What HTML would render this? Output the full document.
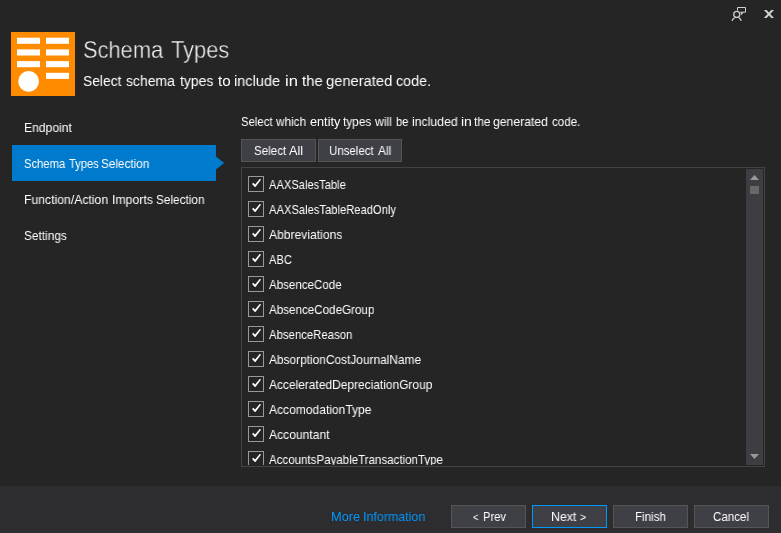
<!DOCTYPE html>
<html lang="en">
<head>
<meta charset="utf-8">
<title>Schema Types</title>
<style>
html,body{margin:0;padding:0;}
body{width:781px;height:533px;overflow:hidden;background:#252526;color:#ffffff;font-family:"Liberation Sans", Arial, sans-serif;font-size:12.7px;position:relative;}
.t{will-change:transform;position:absolute;white-space:pre;line-height:20px;transform-origin:0 0;display:block;}
.abs{position:absolute;}
h1{margin:0;font-weight:normal;font-size:24px;color:#f4f4f4;-webkit-text-stroke:0.4px #252526;}
#sub{font-size:15.2px;}
#footer{position:absolute;left:0;top:486px;width:781px;height:47px;background:#2d2d30;}
#more{color:#0097fb;}
.btn{position:absolute;box-sizing:border-box;background:#3f3f46;border:1px solid #555555;height:23px;padding:0;margin:0;font:inherit;color:inherit;border-radius:0;display:block;overflow:visible;text-align:left;}
.btn.focus{border-color:#0097fb;}
#icon{position:absolute;left:11px;top:32px;width:64px;height:64px;}
.ni{position:absolute;left:12px;width:204px;height:36px;}
.ni.on{background:#007acc;}
#arrow{position:absolute;left:204px;top:11.4px;width:8.1px;height:13px;background:#007acc;clip-path:polygon(0 0,100% 50%,0 100%);}
#list{position:absolute;left:241px;top:167px;width:524px;height:300px;box-sizing:border-box;border:1px solid #434346;background:#252526;overflow:hidden;}
#inner{position:absolute;left:0;top:0;width:522px;height:297px;overflow:hidden;}
.row{position:absolute;left:0;width:500px;height:25px;display:block;}
.cb{position:absolute;left:6px;top:0;width:16px;height:16px;box-sizing:border-box;border:1px solid #999999;background:#252526;display:block;}
.cb svg{position:absolute;left:0;top:0;display:block;}
#track{position:absolute;left:504px;top:1px;width:17px;height:296px;background:#3e3e42;}
</style>
</head>
<body>
<svg id="icon" viewBox="0 0 64 64">
<rect width="64" height="64" fill="#ff8c00"/>
<g fill="#ffffff">
<rect x="6" y="5.7" width="23" height="6.1"/><rect x="35" y="5.7" width="23" height="6.1"/>
<rect x="6" y="17.4" width="23" height="6.1"/><rect x="35" y="17.4" width="23" height="6.1"/>
<rect x="6" y="29.1" width="23" height="6.1"/><rect x="35" y="29.1" width="23" height="6.1"/>
<rect x="35" y="40.8" width="23" height="6.1"/>
<circle cx="17.6" cy="49.4" r="10.4"/>
</g>
</svg>
<h1><span class="t" style="left:82.79px;top:40px;transform:scaleX(0.9106)">Schema </span><span class="t" style="left:170.70px;top:40px;transform:scaleX(0.9099)">Types</span></h1>
<div id="sub"><span class="t" style="left:82.84px;top:71px;transform:scaleX(0.9100)">Select </span><span class="t" style="left:125.60px;top:71px;transform:scaleX(0.9188)">schema </span><span class="t" style="left:179.65px;top:71px;transform:scaleX(0.9194)">types </span><span class="t" style="left:217.75px;top:71px;transform:scaleX(0.9735)">to </span><span class="t" style="left:234.29px;top:71px;transform:scaleX(0.9574)">include </span><span class="t" style="left:284.96px;top:71px;transform:scaleX(1.0900)">in </span><span class="t" style="left:301.85px;top:71px;transform:scaleX(0.9762)">the </span><span class="t" style="left:325.77px;top:71px;transform:scaleX(0.9686)">generated </span><span class="t" style="left:396.08px;top:71px;transform:scaleX(0.9436)">code.</span></div>
<svg class="abs" style="left:728px;top:2px" width="24" height="24" viewBox="0 0 24 24" fill="none" stroke="#d0d0d0" stroke-width="1">
<path d="M9.5 8.5 V5.5 H17.5 V10.2 H12.2"/>
<path d="M13 10.2 V13.3 L15.7 10.4 Z" fill="#d0d0d0" stroke="none"/>
<circle cx="8.75" cy="12.4" r="3.0" stroke-width="1.3"/>
<path d="M4.05 18.9 A4.8 4.8 0 0 1 6.5 15.9 M10.85 15.9 A4.8 4.8 0 0 1 13.3 18.9" stroke-width="1.3"/>
</svg>
<svg class="abs" style="left:762px;top:8px" width="14" height="12" viewBox="0 0 14 12">
<path d="M1.9 2 H4.6 L12 10.1 H9.3 Z" fill="#d2d2d2"/><path d="M12 2 H9.3 L1.9 10.1 H4.6 Z" fill="#d2d2d2"/>
</svg>
<div id="nav">
<div class="ni" style="top:109px"><span class="t" style="left:11.94px;top:9px;transform:scaleX(0.9551)">Endpoint</span></div>
<div class="ni on" style="top:145px"><span class="t" style="left:11.94px;top:9px;transform:scaleX(0.8839)">Schema </span><span class="t" style="left:56.50px;top:9px;transform:scaleX(0.8769)">Types </span><span class="t" style="left:89.10px;top:9px;transform:scaleX(0.9250)">Selection</span><i id="arrow"></i></div>
<div class="ni" style="top:181px"><span class="t" style="left:11.94px;top:9px;transform:scaleX(0.9616)">Function/Action </span><span class="t" style="left:99.53px;top:9px;transform:scaleX(0.9659)">Imports </span><span class="t" style="left:143.90px;top:9px;transform:scaleX(0.9289)">Selection</span></div>
<div class="ni" style="top:217px"><span class="t" style="left:12.09px;top:9px;transform:scaleX(0.9340)">Settings</span></div>
</div>
<div id="desc"><span class="t" style="left:240.83px;top:112px;transform:scaleX(0.8953)">Select </span><span class="t" style="left:276.30px;top:112px;transform:scaleX(0.9250)">which </span><span class="t" style="left:310.40px;top:112px;transform:scaleX(0.9885)">entity </span><span class="t" style="left:343.00px;top:112px;transform:scaleX(0.9333)">types </span><span class="t" style="left:375.00px;top:112px;transform:scaleX(0.9588)">will </span><span class="t" style="left:395.56px;top:112px;transform:scaleX(0.8812)">be </span><span class="t" style="left:411.60px;top:112px;transform:scaleX(0.9660)">included </span><span class="t" style="left:460.98px;top:112px;transform:scaleX(1.1017)">in </span><span class="t" style="left:474.30px;top:112px;transform:scaleX(0.9412)">the </span><span class="t" style="left:493.40px;top:112px;transform:scaleX(0.9606)">generated </span><span class="t" style="left:551.90px;top:112px;transform:scaleX(0.9133)">code.</span></div>
<button class="btn" style="left:241px;top:139px;width:75px"><span class="t" style="left:12.01px;top:1px;transform:scaleX(0.9128)">Select </span><span class="t" style="left:46.80px;top:1px;transform:scaleX(0.9756)">All</span></button>
<button class="btn" style="left:318px;top:139px;width:84px"><span class="t" style="left:10.32px;top:1px;transform:scaleX(0.9050)">Unselect </span><span class="t" style="left:58.50px;top:1px;transform:scaleX(0.9453)">All</span></button>
<div id="list"><div id="inner">
<label class="row" style="top:8px"><span class="cb"><svg width="14" height="14" viewBox="0 0 14 14"><path d="M3.1 7 L4.2 5.7 L6.1 7.6 L10.7 1.9 L12.1 2.5 L6.5 10 L5.5 9.8 Z" fill="#ffffff"/></svg></span><span class="t" style="left:27.20px;top:-1px;transform:scaleX(0.8782)">AAXSalesTable</span></label>
<label class="row" style="top:33px"><span class="cb"><svg width="14" height="14" viewBox="0 0 14 14"><path d="M3.1 7 L4.2 5.7 L6.1 7.6 L10.7 1.9 L12.1 2.5 L6.5 10 L5.5 9.8 Z" fill="#ffffff"/></svg></span><span class="t" style="left:27.20px;top:-1px;transform:scaleX(0.8826)">AAXSalesTableReadOnly</span></label>
<label class="row" style="top:58px"><span class="cb"><svg width="14" height="14" viewBox="0 0 14 14"><path d="M3.1 7 L4.2 5.7 L6.1 7.6 L10.7 1.9 L12.1 2.5 L6.5 10 L5.5 9.8 Z" fill="#ffffff"/></svg></span><span class="t" style="left:27.20px;top:-1px;transform:scaleX(0.9542)">Abbreviations</span></label>
<label class="row" style="top:83px"><span class="cb"><svg width="14" height="14" viewBox="0 0 14 14"><path d="M3.1 7 L4.2 5.7 L6.1 7.6 L10.7 1.9 L12.1 2.5 L6.5 10 L5.5 9.8 Z" fill="#ffffff"/></svg></span><span class="t" style="left:27.20px;top:-1px;transform:scaleX(0.8752)">ABC</span></label>
<label class="row" style="top:108px"><span class="cb"><svg width="14" height="14" viewBox="0 0 14 14"><path d="M3.1 7 L4.2 5.7 L6.1 7.6 L10.7 1.9 L12.1 2.5 L6.5 10 L5.5 9.8 Z" fill="#ffffff"/></svg></span><span class="t" style="left:27.20px;top:-1px;transform:scaleX(0.9115)">AbsenceCode</span></label>
<label class="row" style="top:133px"><span class="cb"><svg width="14" height="14" viewBox="0 0 14 14"><path d="M3.1 7 L4.2 5.7 L6.1 7.6 L10.7 1.9 L12.1 2.5 L6.5 10 L5.5 9.8 Z" fill="#ffffff"/></svg></span><span class="t" style="left:27.20px;top:-1px;transform:scaleX(0.9165)">AbsenceCodeGroup</span></label>
<label class="row" style="top:158px"><span class="cb"><svg width="14" height="14" viewBox="0 0 14 14"><path d="M3.1 7 L4.2 5.7 L6.1 7.6 L10.7 1.9 L12.1 2.5 L6.5 10 L5.5 9.8 Z" fill="#ffffff"/></svg></span><span class="t" style="left:27.20px;top:-1px;transform:scaleX(0.8955)">AbsenceReason</span></label>
<label class="row" style="top:183px"><span class="cb"><svg width="14" height="14" viewBox="0 0 14 14"><path d="M3.1 7 L4.2 5.7 L6.1 7.6 L10.7 1.9 L12.1 2.5 L6.5 10 L5.5 9.8 Z" fill="#ffffff"/></svg></span><span class="t" style="left:27.20px;top:-1px;transform:scaleX(0.9377)">AbsorptionCostJournalName</span></label>
<label class="row" style="top:208px"><span class="cb"><svg width="14" height="14" viewBox="0 0 14 14"><path d="M3.1 7 L4.2 5.7 L6.1 7.6 L10.7 1.9 L12.1 2.5 L6.5 10 L5.5 9.8 Z" fill="#ffffff"/></svg></span><span class="t" style="left:27.20px;top:-1px;transform:scaleX(0.9416)">AcceleratedDepreciationGroup</span></label>
<label class="row" style="top:233px"><span class="cb"><svg width="14" height="14" viewBox="0 0 14 14"><path d="M3.1 7 L4.2 5.7 L6.1 7.6 L10.7 1.9 L12.1 2.5 L6.5 10 L5.5 9.8 Z" fill="#ffffff"/></svg></span><span class="t" style="left:27.20px;top:-1px;transform:scaleX(0.9495)">AccomodationType</span></label>
<label class="row" style="top:258px"><span class="cb"><svg width="14" height="14" viewBox="0 0 14 14"><path d="M3.1 7 L4.2 5.7 L6.1 7.6 L10.7 1.9 L12.1 2.5 L6.5 10 L5.5 9.8 Z" fill="#ffffff"/></svg></span><span class="t" style="left:27.20px;top:-1px;transform:scaleX(0.9537)">Accountant</span></label>
<label class="row" style="top:283px"><span class="cb"><svg width="14" height="14" viewBox="0 0 14 14"><path d="M3.1 7 L4.2 5.7 L6.1 7.6 L10.7 1.9 L12.1 2.5 L6.5 10 L5.5 9.8 Z" fill="#ffffff"/></svg></span><span class="t" style="left:27.20px;top:-1px;transform:scaleX(0.9089)">AccountsPayableTransactionType</span></label>
<div id="track">
<svg class="abs" style="left:0;top:0" width="17" height="296" viewBox="0 0 17 296">
<path d="M4 11 L13 11 L8.5 6 Z" fill="#999999"/>
<rect x="4" y="17" width="9" height="8" fill="#686868"/>
<path d="M4 285 L13 285 L8.5 290 Z" fill="#999999"/>
</svg>
</div>
</div></div>
<div id="footer"></div>
<a id="more"><span class="t" style="left:330.89px;top:507px;transform:scaleX(1.0069)">More </span><span class="t" style="left:362.92px;top:507px;transform:scaleX(0.9806)">Information</span></a>
<button class="btn" style="left:451px;top:505px;width:75px"><span class="t" style="left:21.00px;top:1px;font-size:10.6px;transform:scaleX(0.8833)">&lt; </span><span class="t" style="left:31.02px;top:1px;transform:scaleX(0.8800)">Prev</span></button>
<button class="btn focus" style="left:532px;top:505px;width:75px"><span class="t" style="left:17.73px;top:1px;transform:scaleX(0.9720)">Next </span><span class="t" style="left:47.29px;top:1px;font-size:10.6px;transform:scaleX(0.9852)">&gt;</span></button>
<button class="btn" style="left:613px;top:505px;width:75px"><span class="t" style="left:20.98px;top:1px;transform:scaleX(0.9156)">Finish</span></button>
<button class="btn" style="left:694px;top:505px;width:75px"><span class="t" style="left:18.37px;top:1px;transform:scaleX(0.9110)">Cancel</span></button>
</body>
</html>
